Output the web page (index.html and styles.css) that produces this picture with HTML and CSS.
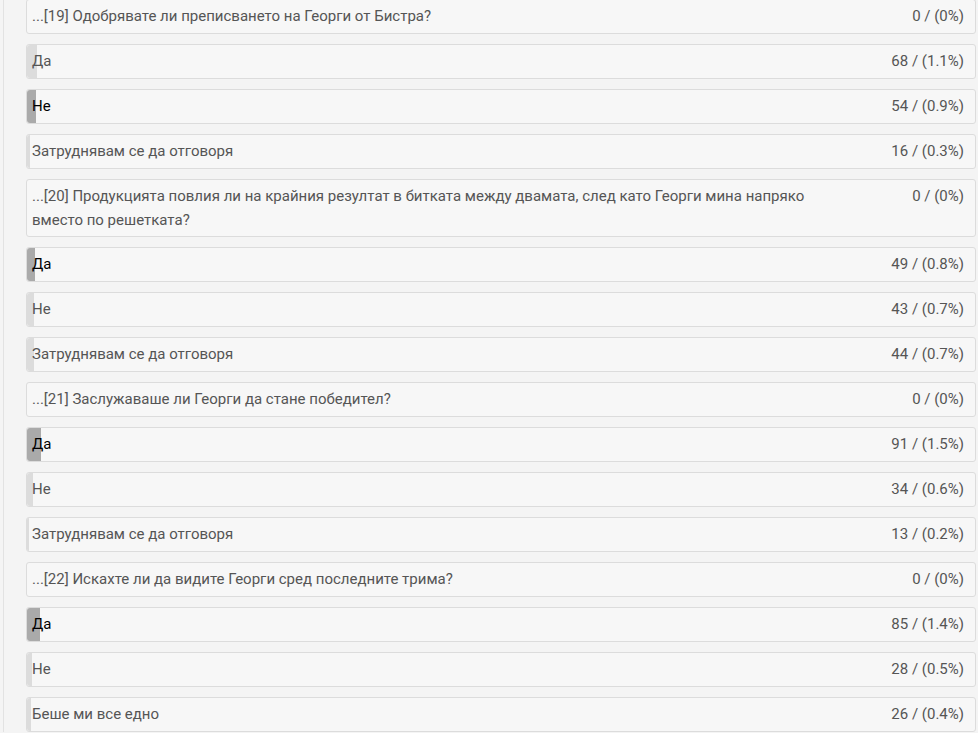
FILE: index.html
```html
<!DOCTYPE html>
<html lang="bg">
  <head>
    <meta charset="UTF-8" />
    <title>Резултати от анкетата</title>
    <link rel="stylesheet" href="styles.css">
  </head>
  <body>
    <div id="poll">
      <div class="results">
        <div class="row question">
          <div class="label">...[19] Одобрявате ли преписването на Георги от Бистра?</div>
          <div class="count">0 / (0%)</div>
        </div>
        <div class="row answer">
          <div class="bar" style="width: 1.1%"></div>
          <div class="label">Да</div>
          <div class="count">68 / (1.1%)</div>
        </div>
        <div class="row answer mine">
          <div class="bar" style="width: 0.9%"></div>
          <div class="label">Не</div>
          <div class="count">54 / (0.9%)</div>
        </div>
        <div class="row answer">
          <div class="bar" style="width: 0.3%"></div>
          <div class="label">Затруднявам се да отговоря</div>
          <div class="count">16 / (0.3%)</div>
        </div>

        <div class="row question">
          <div class="label">...[20] Продукцията повлия ли на крайния резултат в битката между двамата, след като Георги мина напряко вместо по решетката?</div>
          <div class="count">0 / (0%)</div>
        </div>
        <div class="row answer mine">
          <div class="bar" style="width: 0.8%"></div>
          <div class="label">Да</div>
          <div class="count">49 / (0.8%)</div>
        </div>
        <div class="row answer">
          <div class="bar" style="width: 0.7%"></div>
          <div class="label">Не</div>
          <div class="count">43 / (0.7%)</div>
        </div>
        <div class="row answer">
          <div class="bar" style="width: 0.7%"></div>
          <div class="label">Затруднявам се да отговоря</div>
          <div class="count">44 / (0.7%)</div>
        </div>

        <div class="row question">
          <div class="label">...[21] Заслужаваше ли Георги да стане победител?</div>
          <div class="count">0 / (0%)</div>
        </div>
        <div class="row answer mine">
          <div class="bar" style="width: 1.5%"></div>
          <div class="label">Да</div>
          <div class="count">91 / (1.5%)</div>
        </div>
        <div class="row answer">
          <div class="bar" style="width: 0.6%"></div>
          <div class="label">Не</div>
          <div class="count">34 / (0.6%)</div>
        </div>
        <div class="row answer">
          <div class="bar" style="width: 0.2%"></div>
          <div class="label">Затруднявам се да отговоря</div>
          <div class="count">13 / (0.2%)</div>
        </div>

        <div class="row question">
          <div class="label">...[22] Искахте ли да видите Георги сред последните трима?</div>
          <div class="count">0 / (0%)</div>
        </div>
        <div class="row answer mine">
          <div class="bar" style="width: 1.4%"></div>
          <div class="label">Да</div>
          <div class="count">85 / (1.4%)</div>
        </div>
        <div class="row answer">
          <div class="bar" style="width: 0.5%"></div>
          <div class="label">Не</div>
          <div class="count">28 / (0.5%)</div>
        </div>
        <div class="row answer">
          <div class="bar" style="width: 0.4%"></div>
          <div class="label">Беше ми все едно</div>
          <div class="count">26 / (0.4%)</div>
        </div>
      </div>
    </div>
  </body>
</html>
```

FILE: styles.css
```css
body {
  font-family: Roboto, "Liberation Sans", sans-serif;
  font-size: 15px;
  margin: 0;
  padding: 0;
  background: #f4f4f4;
  color: #555;
}

#poll {
  margin-left: 3px;
  border-left: 1px solid #e2e2e2;
  padding: 0 2px 0 22px;
  min-height: 733px;
}

.results {
  margin-top: -1px;
}

.row {
  position: relative;
  display: flex;
  align-items: flex-start;
  background: #f7f7f7;
  border: 1px solid #dcdcdc;
  border-radius: 3px;
  padding: 4px 11px 5px 5px;
  margin-bottom: 10px;
  line-height: 24px;
}

.bar {
  position: absolute;
  top: 0;
  bottom: 0;
  left: 0;
  background: #dcdcdc;
  border-radius: 3px 0 0 3px;
}

.mine .bar {
  background: #aaa;
}

.label {
  position: relative;
  flex: 1;
  padding-right: 150px;
}

.mine .label {
  color: #000;
}

.count {
  position: relative;
  white-space: nowrap;
  text-align: right;
}

.question .label {
  padding-right: 0;
  max-width: 776px;
  margin-bottom: -1px;
}

.question .count {
  margin-left: auto;
}
```
